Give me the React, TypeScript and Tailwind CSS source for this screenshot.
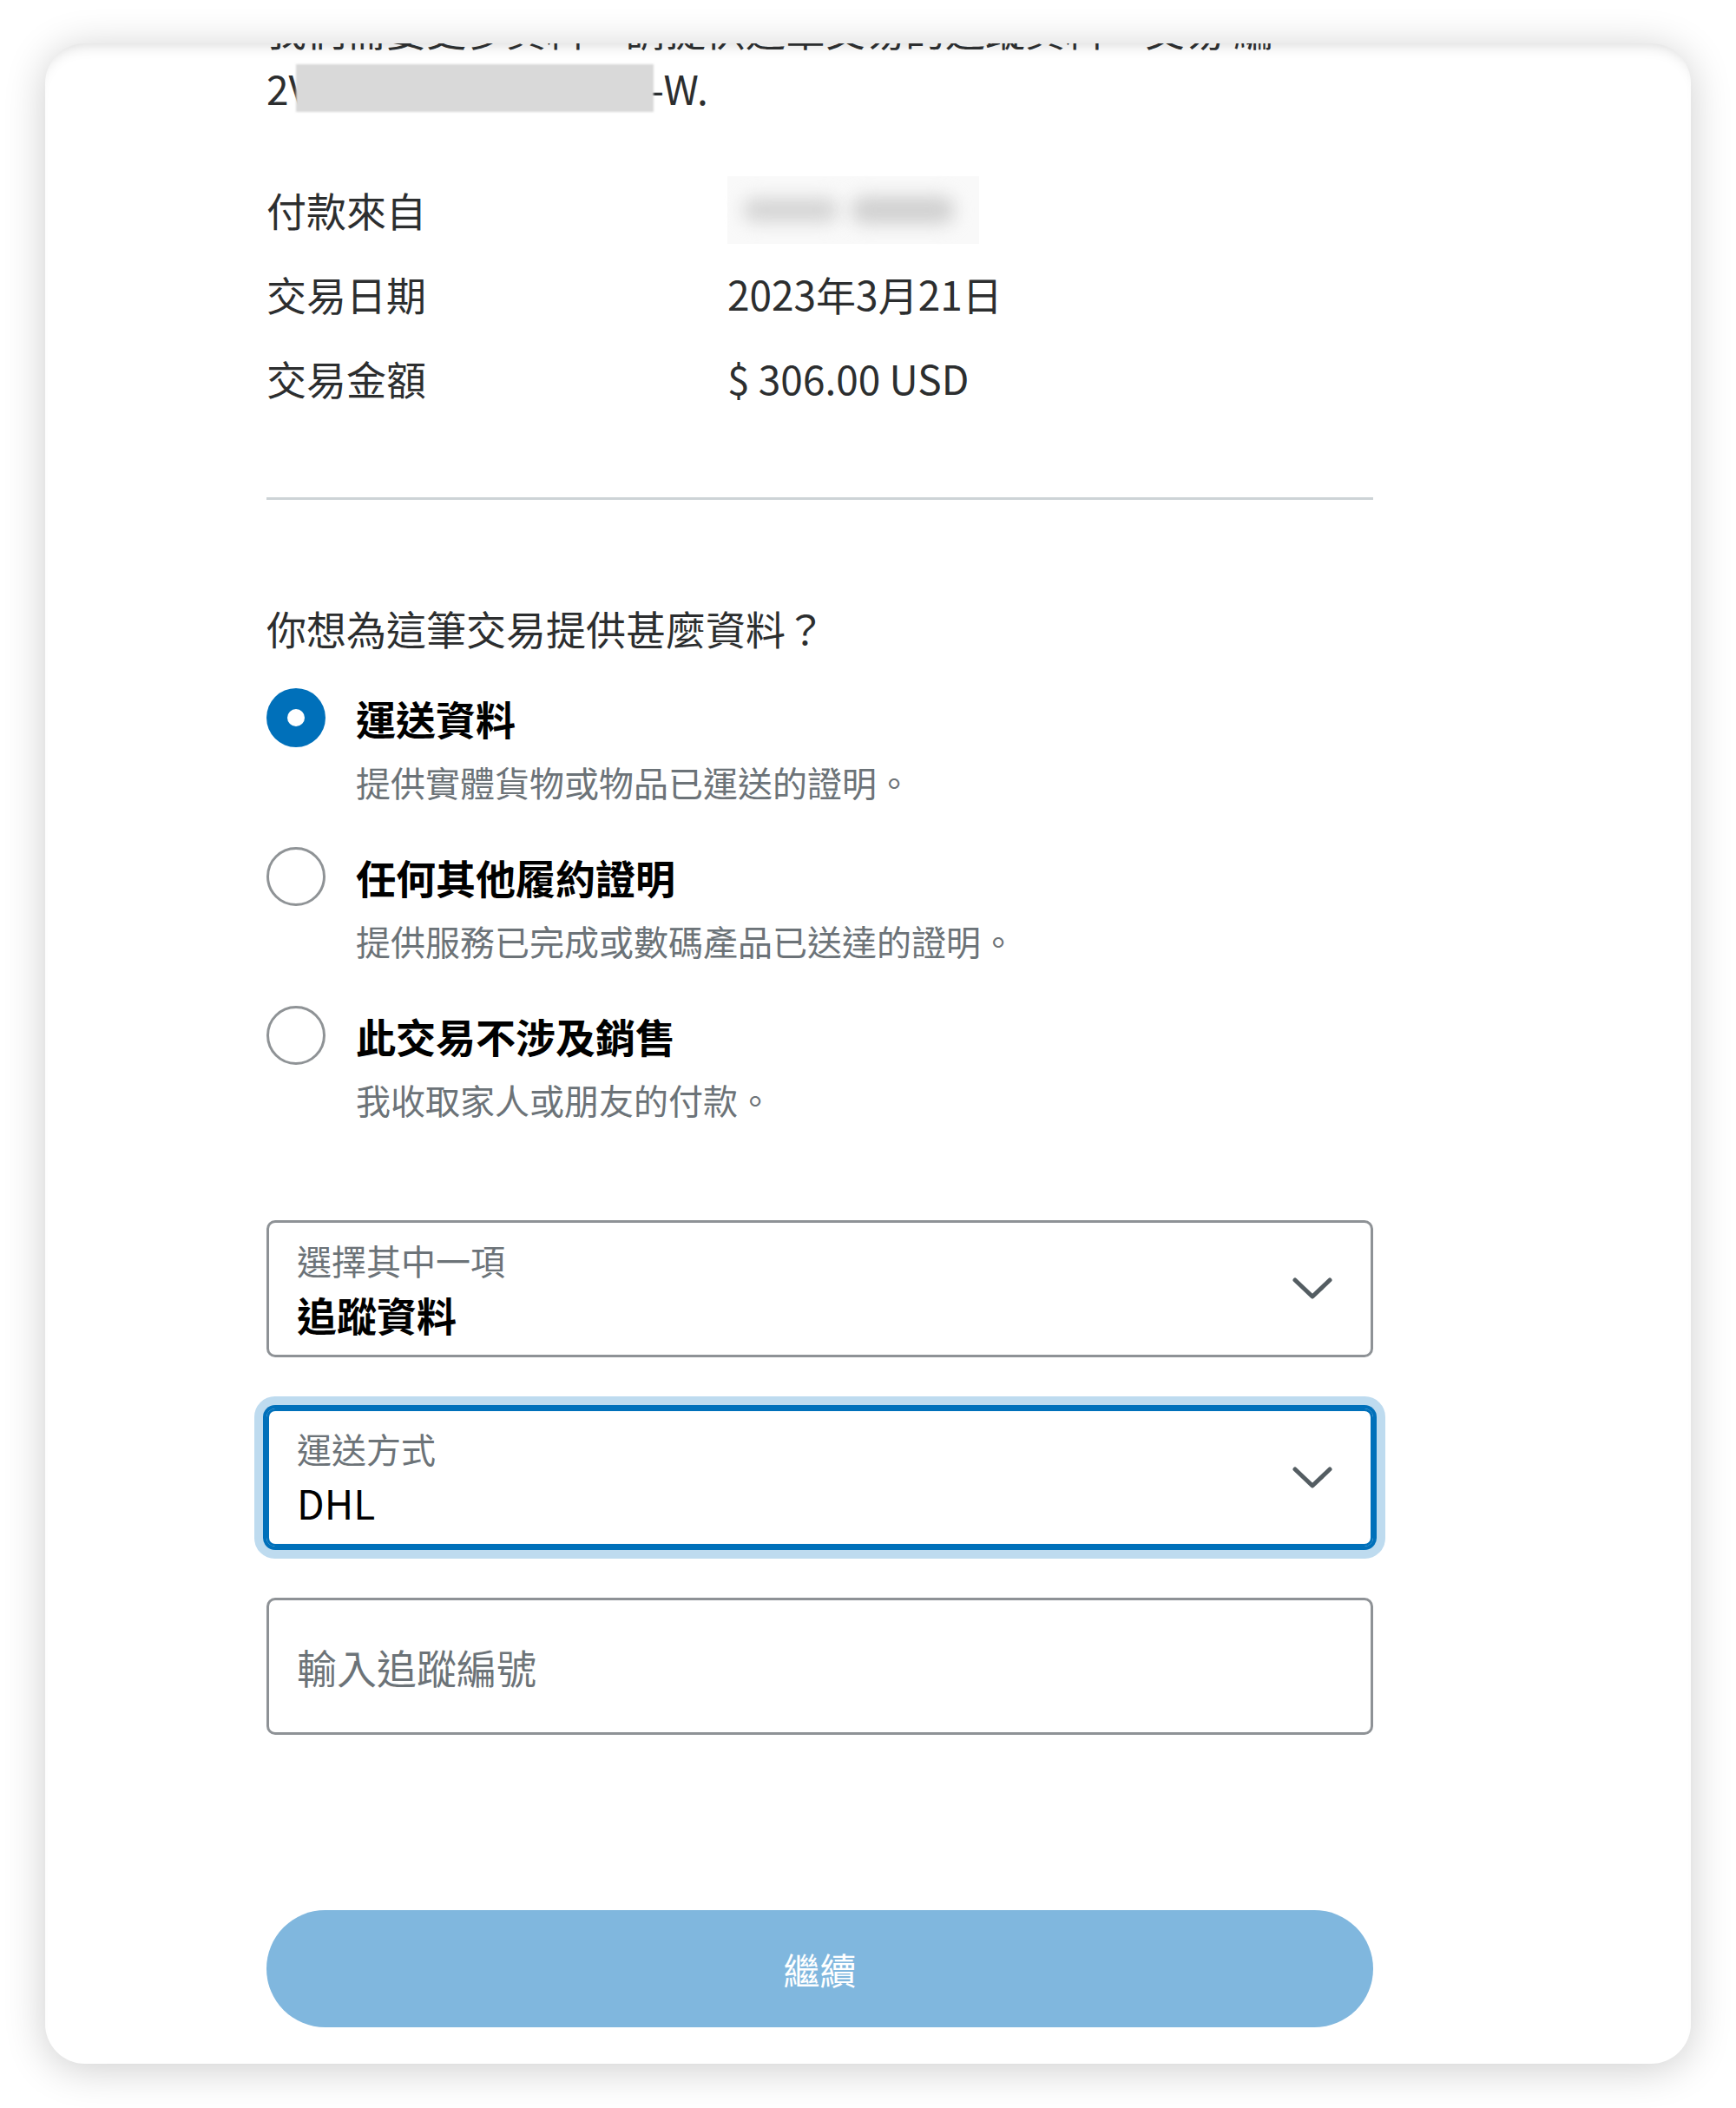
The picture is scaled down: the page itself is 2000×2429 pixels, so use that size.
import React from "react";

interface Option {
  title: string;
  desc: string;
  selected?: boolean;
}

const options: Option[] = [
  { title: "運送資料", desc: "提供實體貨物或物品已運送的證明。", selected: true },
  { title: "任何其他履約證明", desc: "提供服務已完成或數碼產品已送達的證明。" },
  { title: "此交易不涉及銷售", desc: "我收取家人或朋友的付款。" },
];

function Chevron() {
  return (
    <svg width="46" height="26" viewBox="0 0 46 26" fill="none">
      <polyline
        points="3,3 23,22 43,3"
        stroke="#545d62"
        strokeWidth="5"
        strokeLinecap="round"
        strokeLinejoin="round"
      />
    </svg>
  );
}

function SelectBox({
  label,
  value,
  focused,
  bold,
}: {
  label: string;
  value: string;
  focused?: boolean;
  bold?: boolean;
}) {
  return (
    <div
      className={
        focused
          ? "h-[159px] border-[3px] border-[#0070ba] rounded-[10px] flex items-center justify-between pl-[32px] pr-[44px] shadow-[0_0_0_4px_#0070ba,0_0_0_14px_#bedbef]"
          : "h-[158px] border-[3px] border-[#8e9296] rounded-[10px] flex items-center justify-between pl-[32px] pr-[44px]"
      }
    >
      <div>
        <div className="text-[40px] leading-[50px] text-[#6c7378]">{label}</div>
        <div
          className={
            bold
              ? "mt-[7px] text-[46px] leading-[60px] font-bold text-black"
              : "mt-[7px] text-[46px] leading-[60px] text-black"
          }
        >
          {value}
        </div>
      </div>
      <Chevron />
    </div>
  );
}

export default function App() {
  return (
    <div className="w-[2000px] h-[2429px] bg-white pt-[50px] px-[52px] font-['Noto_Sans_CJK_TC',sans-serif] text-[#2c2e2f]">
      <div className="h-[2328px] rounded-[46px] bg-white overflow-hidden pl-[255px] shadow-[inset_0_14px_18px_-14px_rgba(0,0,0,0.18),0_6px_48px_rgba(0,0,0,0.2)]">
        <div className="w-[1275px]">
          {/* intro text, top line cut by the card edge */}
          <p className="-mt-[51px] h-[68px] leading-[68px] text-[46px] whitespace-nowrap">
            我們需要更多資料，請提供這筆交易的追蹤資料，交易 編
          </p>
          <div className="flex items-center h-[68px] text-[46px]">
            <span>2V</span>
            <span className="relative z-10 -ml-[18px] inline-block w-[412px] h-[55px] bg-[#d9d9d9] blur-[1px]" />
            <span className="-ml-[4px]">-W.</span>
          </div>

          <div className="mt-[58px]">
            <div className="flex items-center h-[97px] text-[46px]">
              <div className="w-[531px]">付款來自</div>
              <div className="w-[290px] h-[78px] bg-[#f9f9f9] flex items-center px-[18px] gap-[14px]">
                <div className="w-[110px] h-[28px] bg-[#d4d4d4] rounded-full blur-[10px]" />
                <div className="w-[120px] h-[32px] bg-[#d0d0d0] rounded-full blur-[10px]" />
              </div>
            </div>
            <div className="flex items-center h-[97px] text-[46px]">
              <div className="w-[531px]">交易日期</div>
              <div>2023年3月21日</div>
            </div>
            <div className="flex items-center h-[97px] text-[46px]">
              <div className="w-[531px]">交易金額</div>
              <div>$ 306.00 USD</div>
            </div>
          </div>

          <div className="mt-[89px] h-[3px] bg-[#cdd3d6]" />

          <p className="mt-[113px] h-[68px] leading-[68px] text-[46px]">你想為這筆交易提供甚麼資料？</p>

          <div className="mt-[36px] flex flex-col gap-[46px]">
            {options.map((o) => (
              <div key={o.title} className="flex">
                {o.selected ? (
                  <div className="w-[68px] h-[68px] shrink-0 rounded-full bg-[#0070ba] flex items-center justify-center">
                    <div className="w-[20px] h-[20px] rounded-full bg-white" />
                  </div>
                ) : (
                  <div className="w-[68px] h-[68px] shrink-0 rounded-full border-[3px] border-[#8f9396] bg-white" />
                )}
                <div className="ml-[35px]">
                  <div className="h-[68px] leading-[68px] text-[46px] font-bold text-black">{o.title}</div>
                  <div className="mt-[11px] h-[58px] leading-[58px] text-[40px] text-[#6c7378]">{o.desc}</div>
                </div>
              </div>
            ))}
          </div>

          <div className="mt-[110px]">
            <SelectBox label="選擇其中一項" value="追蹤資料" bold />
          </div>
          <div className="mt-[59px]">
            <SelectBox label="運送方式" value="DHL" focused />
          </div>
          <div className="mt-[59px] h-[158px] border-[3px] border-[#8e9296] rounded-[10px] flex items-center pl-[32px] text-[46px] text-[#6c7378]">
            輸入追蹤編號
          </div>

          <button className="mt-[202px] w-full h-[135px] rounded-full bg-[#80b7de] text-white text-[42px] flex items-center justify-center">
            繼續
          </button>
        </div>
      </div>
    </div>
  );
}
